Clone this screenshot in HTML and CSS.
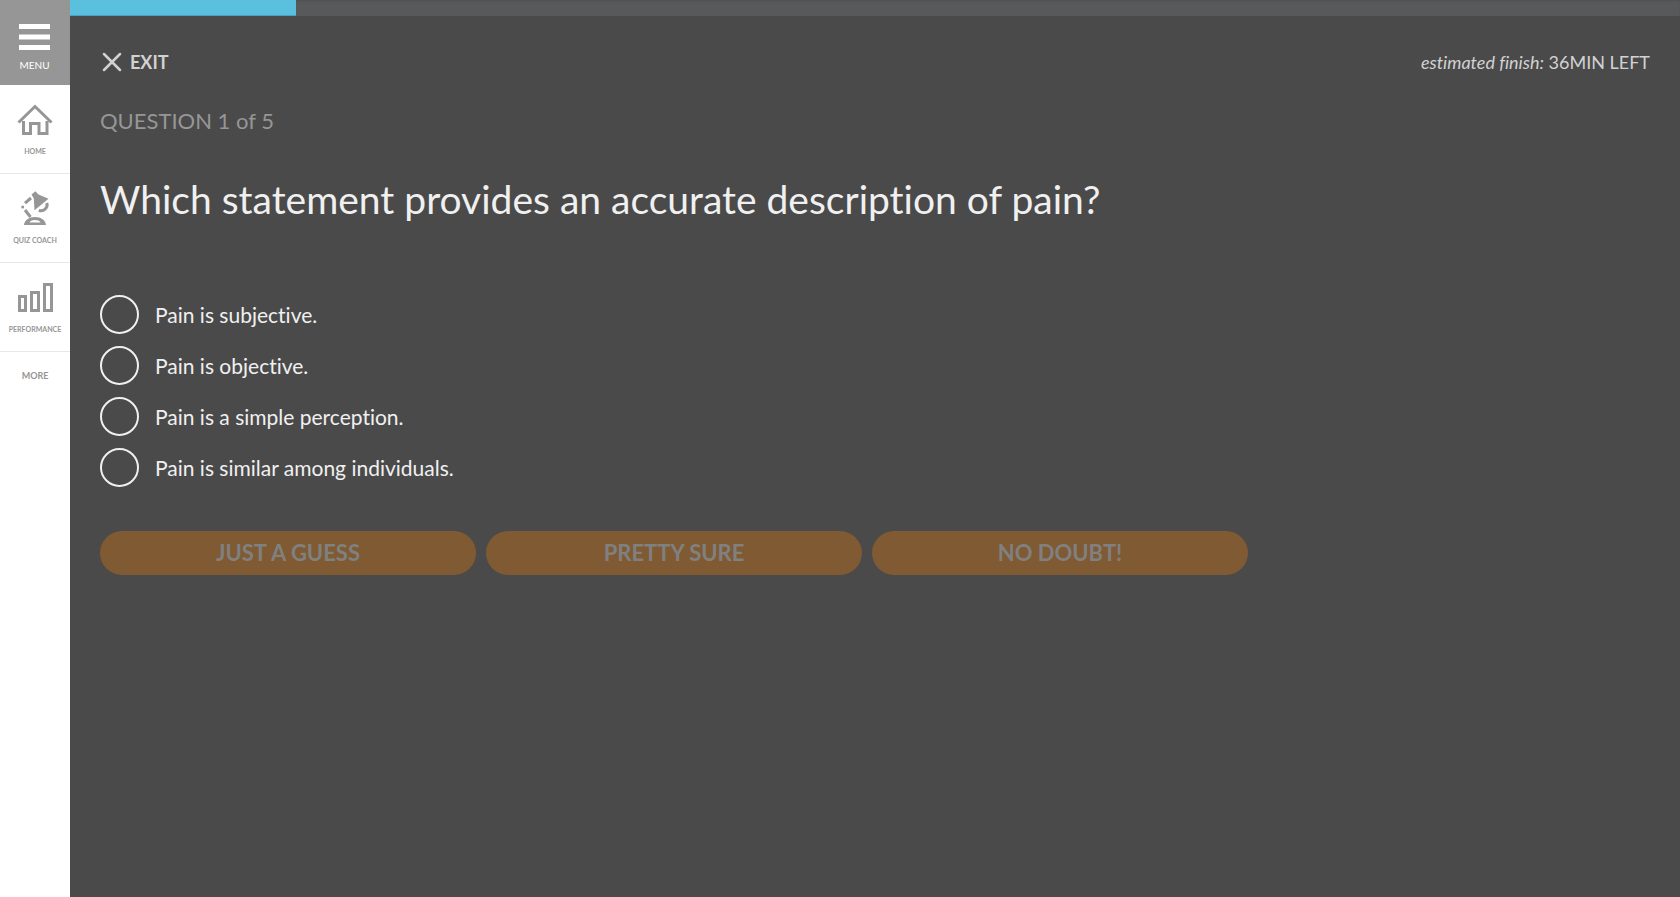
FILE: index.html
```html
<!DOCTYPE html>
<html lang="en">
<head>
<meta charset="utf-8">
<title>Quiz Coach</title>
<link rel="stylesheet" href="styles.css">
</head>
<body>
<div class="app">
  <nav class="sidebar" aria-label="Main">
    <button class="menu-button" type="button">
      <svg class="menu-icon" viewBox="0 0 31 26" aria-hidden="true"><path d="M0 0h31v5H0zM0 10.500h31v5H0zM0 21h31v5H0z"/></svg>
      <span>MENU</span>
    </button>
    <a class="nav-item" href="#home">
      <svg class="nav-icon" viewBox="0 0 36 36" aria-hidden="true"><path class="line" d="M1.500 20.500 18 4.500l16.500 16M6.500 19v12.500h7V21.500h8.500v10h8V19"/></svg>
      <span>HOME</span>
    </a>
    <a class="nav-item" href="#quiz-coach">
      <svg class="nav-icon" viewBox="0 0 36 36" aria-hidden="true">
        <path class="fill" d="M14.500 3.500 18.300.2l3.200 3.300 10 4.200-14 11.500-.7-11.700z"/>
        <path class="line" d="M14 7 8 12.200"/>
        <circle class="fill" cx="5.700" cy="16" r="1.500"/>
        <path class="line" d="m8 19 5.500 7M29.800 12a6 6 0 0 1-8 7.300"/>
        <path class="fill" fill-rule="evenodd" d="M7 34c.5-5 5-8 11-8s10.500 3 11 8zm5.500-2.500h11c-1-1.800-3-2.500-5.500-2.500s-4.500.7-5.500 2.500z"/>
      </svg>
      <span>QUIZ COACH</span>
    </a>
    <a class="nav-item" href="#performance">
      <svg class="nav-icon" viewBox="0 0 36 36" aria-hidden="true"><path class="line" d="M2.500 16.500h6v14h-6zM14.500 12.500h7v18h-7zM27.500 4.500h7v26h-7z"/></svg>
      <span>PERFORMANCE</span>
    </a>
    <a class="more-link" href="#more">MORE</a>
  </nav>
  <div class="page">
    <div class="progress" role="progressbar" aria-label="Quiz progress" aria-valuenow="14" aria-valuemin="0" aria-valuemax="100">
      <div class="progress-bar" style="width: 14.050%"></div>
    </div>
    <main class="content">
      <header class="topbar">
        <button class="exit" type="button">
          <svg class="exit-icon" viewBox="0 0 20 20" aria-hidden="true"><path d="m2 2 16 16M18 2 2 18"/></svg>
          <span>EXIT</span>
        </button>
        <p class="estimate"><em>estimated finish:</em> 36MIN LEFT</p>
      </header>
      <p class="counter">QUESTION 1 of 5</p>
      <h1 class="question" id="question">Which statement provides an accurate description of pain?</h1>
      <form class="quiz">
        <div class="options" role="radiogroup" aria-labelledby="question">
          <label class="option"><input class="radio" type="radio" name="answer"><span>Pain is subjective.</span></label>
          <label class="option"><input class="radio" type="radio" name="answer"><span>Pain is objective.</span></label>
          <label class="option"><input class="radio" type="radio" name="answer"><span>Pain is a simple perception.</span></label>
          <label class="option"><input class="radio" type="radio" name="answer"><span>Pain is similar among individuals.</span></label>
        </div>
        <div class="actions">
          <button class="confidence" type="button" disabled>JUST A GUESS</button>
          <button class="confidence" type="button" disabled>PRETTY SURE</button>
          <button class="confidence" type="button" disabled>NO DOUBT!</button>
        </div>
      </form>
    </main>
  </div>
</div>
</body>
</html>
```
FILE: styles.css
```css
* {
  box-sizing: border-box;
}

body {
  margin: 0;
  background: #4a4a4a;
  color: #f0f0f0;
  font-family: Lato, "Open Sans", sans-serif;
  font-variant-ligatures: none;
}

button {
  border: 0;
  font-family: inherit;
}

.app {
  display: flex;
  min-height: 100vh;
}

.sidebar {
  display: flex;
  flex-direction: column;
  flex: none;
  width: 70px;
  background: #fff;
}

.menu-button {
  display: flex;
  flex-direction: column;
  align-items: center;
  gap: 9px;
  height: 85px;
  padding: 24px 1px 0 0;
  background: #969696;
  color: #fff;
  font-size: 10px;
  line-height: 12px;
}

.menu-icon {
  width: 31px;
  height: 26px;
  fill: #fff;
}

.nav-item {
  display: flex;
  flex-direction: column;
  align-items: center;
  gap: 8px;
  height: 89px;
  padding-top: 17px;
  border-bottom: 1px solid #e8e8e8;
  color: #969696;
  font-size: 7px;
  font-weight: 700;
  line-height: 10px;
  text-decoration: none;
}

.nav-icon {
  width: 36px;
  height: 36px;
}

.line {
  fill: none;
  stroke: #969696;
  stroke-width: 3;
}

.fill {
  fill: #969696;
}

.more-link {
  padding-top: 18px;
  color: #969696;
  font-size: 9px;
  font-weight: 700;
  line-height: 12px;
  text-align: center;
  text-decoration: none;
}

.page {
  flex: 1;
  min-width: 0;
}

.progress {
  height: 16px;
  background: #58595b;
  box-shadow: inset 0 1px 2px rgba(0, 0, 0, 0.1);
}

.progress-bar {
  height: 100%;
  background: #5bc0de;
  box-shadow: inset 0 -1px 0 rgba(0, 0, 0, 0.15);
}

.content {
  padding: 34px 30px;
}

.topbar {
  display: flex;
  align-items: center;
  justify-content: space-between;
  height: 24px;
}

.exit {
  display: flex;
  align-items: center;
  gap: 8px;
  padding: 0 0 0 2px;
  background: none;
  color: #d2d2d2;
  font-size: 18px;
  font-weight: 700;
  line-height: 24px;
}

.exit-icon {
  width: 20px;
  height: 20px;
  fill: none;
  stroke: #d2d2d2;
  stroke-width: 2.500;
  stroke-linecap: round;
}

.estimate {
  margin: 0;
  color: #d2d2d2;
  font-size: 18px;
  line-height: 24px;
}

.counter {
  margin: 31px 0 0;
  color: #969696;
  font-size: 22px;
  line-height: 32px;
}

.question {
  margin: 36px 0 0;
  font-size: 39px;
  font-weight: 400;
  line-height: 52px;
}

.options {
  display: flex;
  flex-direction: column;
  align-items: flex-start;
  gap: 12px;
  margin-top: 70px;
}

.option {
  display: flex;
  align-items: center;
  gap: 16px;
  font-size: 21px;
  line-height: 24px;
}

.radio {
  appearance: none;
  flex: none;
  width: 39px;
  height: 39px;
  margin: 0;
  border: 2px solid #f0f0f0;
  border-radius: 50%;
}

.radio:checked {
  background: #5bc0de;
}

.actions {
  display: grid;
  grid-template-columns: repeat(3, 1fr);
  gap: 10px;
  max-width: 1148px;
  margin-top: 44px;
}

.confidence {
  height: 44px;
  padding: 0;
  border-radius: 22px;
  background: #7f5a33;
  color: #808080;
  font-size: 22px;
  font-weight: 700;
  line-height: 28px;
}
```
